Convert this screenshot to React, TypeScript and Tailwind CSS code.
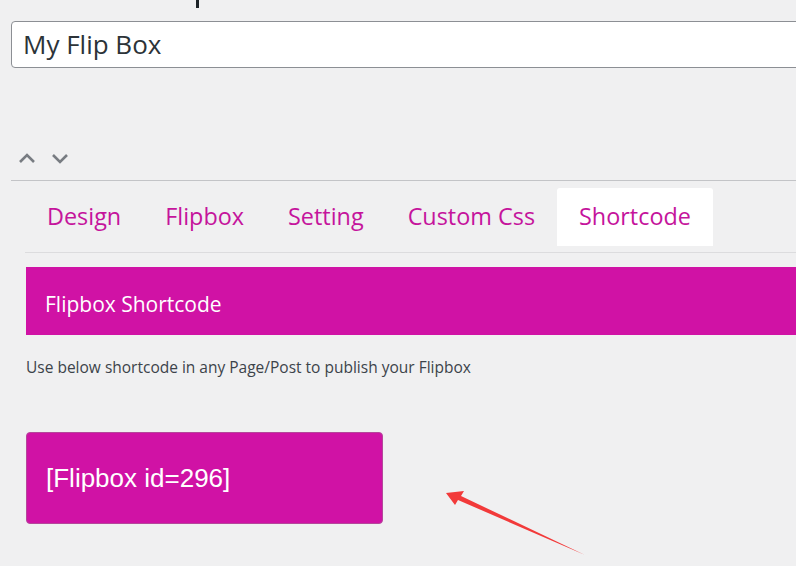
import React from "react";

const TABS = ["Design", "Flipbox", "Setting", "Custom Css", "Shortcode"];

function Chevron({ up }: { up?: boolean }) {
  return (
    <svg width="18" height="12" viewBox="0 0 18 12" fill="none">
      <path
        d={up ? "M2 10 L9 3 L16 10" : "M2 3 L9 10 L16 3"}
        stroke="#787c82"
        strokeWidth="2.6"
      />
    </svg>
  );
}

export default function App() {
  return (
    <div
      className="relative w-[796px] h-[566px] overflow-hidden bg-[#f0f0f1]"
      style={{ fontFamily: '"Open Sans", "Noto Sans", sans-serif' }}
    >
      {/* descender of the label above, cut off by the screenshot */}
      <div className="absolute left-[196px] top-0 h-[8px] w-[3px] bg-[#1d2327]" />

      <div className="pl-[11px] pt-[21px]">
        <div className="flex h-[47px] w-[820px] items-center rounded-[4px] border border-[#8c8f94] bg-white pl-[11px] text-[26px] text-[#2c3338]">
          My Flip Box
        </div>

        <div className="mt-[84px] flex items-center gap-[15px] pl-[7px]">
          <Chevron up />
          <Chevron />
        </div>

        <div className="mt-[16px] border-t border-[#c3c4c7]" />

        <div className="ml-[14px] mt-[7px] flex border-b border-[#dcdcde]">
          {TABS.map((t) => (
            <div
              key={t}
              className={
                "flex h-[58px] items-center px-[22px] text-[23.4px] text-[#c5149c] rounded-t-[3px] mb-[6px] " +
                (t === "Shortcode" ? "bg-white" : "")
              }
            >
              {t}
            </div>
          ))}
        </div>

        <div className="ml-[15px] mt-[14px]">
          <div className="flex h-[68px] items-center bg-[#d012a5] pl-[19px] pt-[8px] text-[21px] text-white">
            Flipbox Shortcode
          </div>
          <p className="mt-[21px] text-[15.5px] text-[#3c434a]">
            Use below shortcode in any Page/Post to publish your Flipbox
          </p>
          <div
            className="mt-[53px] flex h-[92px] w-[357px] items-center rounded-[4px] border border-[#b5479b] bg-[#d012a5] pl-[19px] text-[26px] text-white"
            style={{ fontFamily: '"Liberation Sans", Arial, sans-serif' }}
          >
            [Flipbox id=296]
          </div>
        </div>
      </div>

      <svg
        className="absolute left-0 top-0"
        width="796"
        height="566"
        viewBox="0 0 796 566"
        fill="none"
      >
        <polygon
          points="446,493 464,491 461,496 585,555 458,500 455,505"
          fill="#f23a3a"
        />
      </svg>
    </div>
  );
}
